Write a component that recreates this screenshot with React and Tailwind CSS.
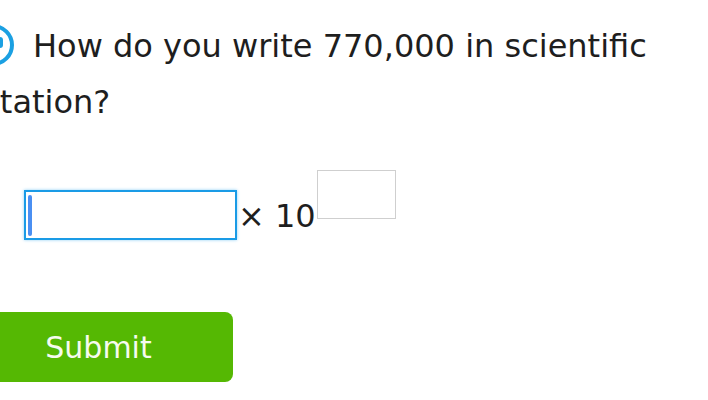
import React from 'react';

// Question number badge: only the right rim of the ring shows at the page edge
function Badge() {
  return (
    <svg width="54" height="44" viewBox="0 0 54 44" className="inline-block align-middle mr-[19px] -mt-[6px]">
      <circle cx="33" cy="22" r="19" fill="none" stroke="#1ba0e2" strokeWidth="4" />
      <rect x="37" y="14" width="6" height="11" rx="3" fill="#1ba0e2" />
    </svg>
  );
}

export default function App() {
  return (
    <div className="w-[708px] h-[400px] overflow-hidden bg-white text-[#1e1e1e]" style={{ fontFamily: '"DejaVu Sans", Verdana, sans-serif' }}>
      <div className="-ml-[40px] w-[780px] flex flex-col">
        <p className="pt-[18px] text-[32px] leading-[56px] w-[760px]">
          <Badge />
          How do you write 770,000 in scientific notation?
        </p>

        <div className="mt-[40px] ml-[64px] flex items-start">
          <div className="mt-[20px] w-[213px] h-[50px] border-2 border-[#1a9be6] shadow-[0_0_3px_#8fd0f5] flex items-center pl-[2px]">
            <div className="w-[4px] h-[41px] rounded-full bg-[#4a8ff2]" />
          </div>
          <span className="mt-[28px] ml-[1px] text-[32px] leading-[36px] whitespace-pre">× 10</span>
          <div className="ml-[1px] w-[79px] h-[49px] border-[1.5px] border-[#cfcfcf]" />
        </div>

        <button className="mt-[72px] w-[273px] h-[70px] rounded-lg bg-[#55b803] text-[#f6fbef] text-[30px] text-center pl-[4px]">
          Submit
        </button>
      </div>
    </div>
  );
}
